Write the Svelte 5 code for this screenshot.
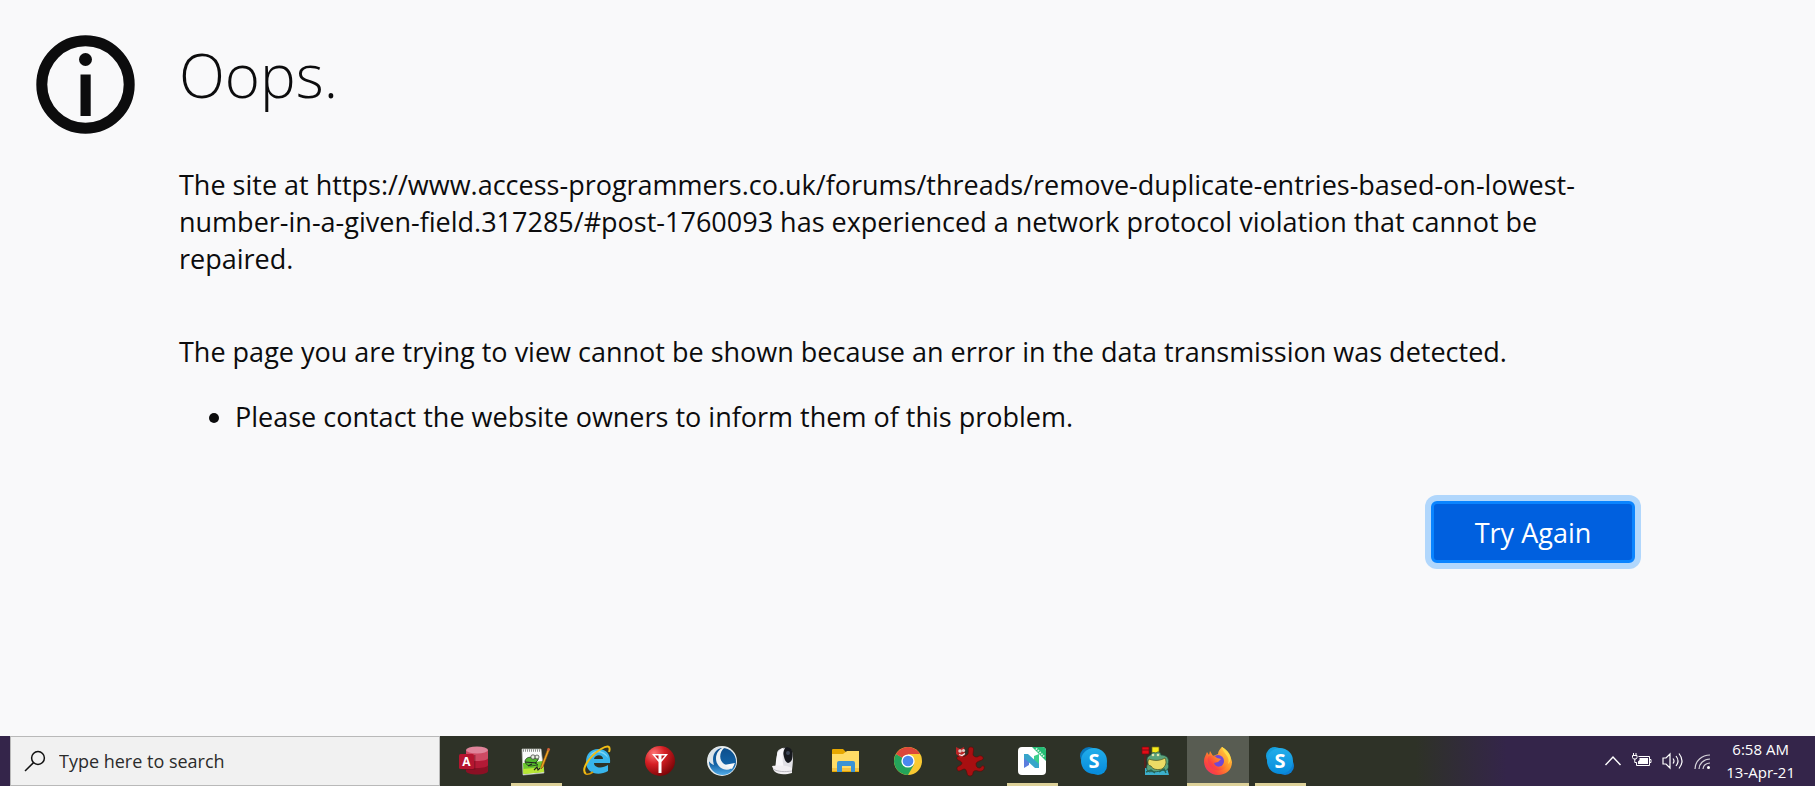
<script lang="ts">
	interface App {
		id: string;
		name: string;
		open?: boolean;
		active?: boolean;
	}

	const apps: App[] = [
		{ id: 'access', name: 'Access' },
		{ id: 'notepad', name: 'Notepad++', open: true },
		{ id: 'ie', name: 'Internet Explorer' },
		{ id: 'antenna', name: 'Antenna' },
		{ id: 'glary', name: 'Utilities' },
		{ id: 'camera', name: 'Camera' },
		{ id: 'explorer', name: 'File Explorer' },
		{ id: 'chrome', name: 'Chrome' },
		{ id: 'splat', name: 'IrfanView' },
		{ id: 'neat', name: 'Notes', open: true },
		{ id: 'skype', name: 'Skype' },
		{ id: 'frog', name: 'Frog' },
		{ id: 'firefox', name: 'Firefox', active: true },
		{ id: 'skype2', name: 'Skype', open: true }
	];

	let query = $state('');

	function retry() {
		location.reload();
	}
</script>

<div class="screen">
	<main class="error-page">
		<svg class="info-icon" viewBox="0 0 99 99" aria-hidden="true">
			<circle cx="49.5" cy="49.5" r="43.7" fill="none" stroke="#0c0c0d" stroke-width="11" />
			<circle cx="49.5" cy="24.5" r="6.5" fill="#0c0c0d" />
			<path d="M44.5 39.5h10.2v41.5H44.5z" fill="#0c0c0d" />
		</svg>

		<div class="content">
			<h1>Oops.</h1>
			<p class="short-desc">
				The site at https://www.access-programmers.co.uk/forums/threads/remove-duplicate-entries-based-on-lowest-number-in-a-given-field.317285/#post-1760093
				has experienced a network protocol violation that cannot be repaired.
			</p>
			<p>The page you are trying to view cannot be shown because an error in the data transmission was detected.</p>
			<ul>
				<li>Please contact the website owners to inform them of this problem.</li>
			</ul>
			<div class="actions">
				<button class="try-again" onclick={retry}>Try Again</button>
			</div>
		</div>
	</main>

	<footer class="taskbar">
		<label class="search">
			<svg width="22" height="22" viewBox="0 0 22 22" fill="none" stroke="#111" stroke-width="1.5">
				<circle cx="14" cy="8" r="6.4" />
				<path d="M9.5 12.6 1 21" />
			</svg>
			<input type="text" placeholder="Type here to search" aria-label="Search" bind:value={query} />
		</label>

		<nav class="apps">
			{#each apps as app}
				<button class="app" class:open={app.open} class:active={app.active} aria-label={app.name}>
					<svg width="32" height="32" viewBox="0 0 32 32">
						{#if app.id === 'access'}
							<path d="M8 5v21c0 2 5 3.500 11 3.500s11-1.500 11-3.500V5z" fill="#8b1024" />
							<path d="M8 5v15c0 2 5 3 11 3s11-1 11-3V5z" fill="#b31a36" />
							<path d="M8 5v8c0 2 5 3 11 3s11-1 11-3V5z" fill="#cf4a63" />
							<ellipse cx="19" cy="5" rx="11" ry="3.500" fill="#e0849a" />
							<path d="M16 10h1.500v15H4v-1h12z" fill="#6f0c1c" opacity=".5" />
							<rect x="1" y="9" width="15" height="15" rx="1.500" fill="#b5152f" />
							<text x="8.500" y="21" class="glyph" font-size="12">A</text>
						{:else if app.id === 'notepad'}
							<path d="M2 4h19l3 24-21 2z" fill="#fafafa" stroke="#b9bdb4" stroke-width=".7" />
							<path d="M3 18l20-2 1 11-20.500 2z" fill="#6cc62f" />
							<path d="M3 24l20.500-2 .5 5-20.500 2z" fill="#b8e534" />
							<path d="M3 5.500h17" stroke="#8d918c" stroke-width="2.500" stroke-dasharray="1 1" />
							<path d="M5 16c1-4 6-5 9-2 2-3 5-1 4 1l-3 3 3 2-7 1c-3 0-6-2-6-5z" fill="#51b52d" stroke="#203d19" stroke-width=".8" />
							<circle cx="13" cy="12" r="2.200" fill="#e7eee0" stroke="#333" stroke-width=".7" />
							<circle cx="17" cy="12" r="2" fill="#e7eee0" stroke="#333" stroke-width=".7" />
							<path d="M5 17l12 1M8 21l4-2M14 25l3-3 1 3 2-2" stroke="#222" stroke-width="1.100" fill="none" />
							<path d="M28 3l2 1-7 18-2 2v-3z" fill="#eda321" stroke="#78440e" stroke-width=".6" />
							<path d="M28 3l2 1-1 2-2-1z" fill="#d15b44" />
						{:else if app.id === 'ie'}
							<path d="M4 17C4 9 9 4 16 4c8 0 13 5 12 14H12c0 5 8 6 14 2v6c-10 6-22 2-22-9zm8-3h9c0-5-8-5-9 0z" fill="#38b5ec" />
							<path d="M6 14C8 8 13 5 18 6c4 1 7 3 8 7-4-5-10-7-15-4-3 1-4 3-5 5z" fill="#8ddcf8" opacity=".8" />
							<path d="M4 29C-2 24 9 10 19 4c7-4 10-3 8 3" fill="none" stroke="#f2bd14" stroke-width="2" />
							<path d="M4 29c2 1 4 0 7-2" fill="none" stroke="#d69a0b" stroke-width="1.600" />
						{:else if app.id === 'antenna'}
							<circle cx="16" cy="16" r="15" fill="url(#red-ball)" />
							<path d="M8 9h16l-6.500 8v11h-3V17z" fill="#fff" />
							<path d="M11 10.500h3.500v4zM21 10.500h-3.500v4z" fill="#c01a1f" />
						{:else if app.id === 'glary'}
							<circle cx="16" cy="16" r="15" fill="#e8edef" />
							<circle cx="16.500" cy="16.500" r="13.500" fill="url(#blue-ball)" />
							<path d="M19 2C9 4 6 19 17 24c5 2 9 0 11-4-2 1-5 1-8 0-7-3-8-12-1-18z" fill="#edf1f3" />
							<path d="M2 14C3 5 10 1 19 2 9 3 5 11 8 20c-3-1-5-3-6-6z" fill="#dce4e9" />
							<path d="M18 20l11-2-3 6z" fill="#f8fafb" />
						{:else if app.id === 'camera'}
							<path d="M9 8c1-5 10-7 14-3 3 3 2 13 1 20H7c1-4 2-11 2-17z" fill="#e1e0e5" />
							<path d="M15 3c5-2 9 0 9.500 5s-.5 9-4.500 10c-4-1-5-10-5-15z" fill="#17191e" />
							<path d="M17 3c-3 5-3 13-1 20H7C9 14 7 4 17 3z" fill="#f8f7fa" />
							<circle cx="20" cy="8" r="2" fill="#3d4657" />
							<path d="M4 21c5-1 16-1 20 2v5c-7 2-14 2-18-2z" fill="#f1eff2" />
							<path d="M5 24c5 3 12 3 19 2" fill="none" stroke="#bbb9c0" stroke-width="1" />
						{:else if app.id === 'explorer'}
							<path d="M2 5q0-1 1-1h10l3 3h13v20H2z" fill="#e6a700" />
							<path d="M2 9h11l4-3h12v20H2z" fill="#ffdc66" />
							<path d="M2 23h27v3H2z" fill="#f5c342" />
							<path d="M7 27v-9q0-2 2-2h14q2 0 2 2v9h-4v-6h-9v6z" fill="#3b93d4" />
						{:else if app.id === 'chrome'}
							<circle cx="16" cy="16" r="14" fill="#f9c932" />
							<path d="M16 16 3.900 9A14 14 0 0 0 16 30l6-10.500z" fill="#24a35a" />
							<path d="M16 16 3.900 9a14 14 0 0 1 24.200 0H16z" fill="#dc473b" />
							<circle cx="16" cy="16" r="6.600" fill="#fff" />
							<circle cx="16" cy="16" r="5.300" fill="#4b88ed" />
						{:else if app.id === 'splat'}
							<path d="M14 9c1-3-1-7 3-7s2 4 2 8c2 3 5 2 6 1 3-1 6 2 3 4-3 1-6 2-6 4s1 4 3 4c2 1 2-3 5-2 1 4-2 6-6 5-3-1-5 0-5 2 0 4-6 4-6 0-1-3-1-4-3-4-3 1-6 4-7 0-1-3 5-3 5-6-1-3-6-2-5-6 2-2 6 2 11-3z" fill="#a80f11" stroke="#560b09" stroke-width=".6" />
							<path d="M2 2l4 2 4-2 1 8-4 3-5-4z" fill="#b92425" />
							<circle cx="6" cy="6" r="1.800" fill="#dfc8c4" />
							<circle cx="9.500" cy="5.500" r="1.600" fill="#dfc8c4" />
							<path d="M5 9.500l3 1 3-2" stroke="#eee" stroke-width="1.200" fill="none" />
						{:else if app.id === 'neat'}
							<rect x="2" y="2" width="28" height="28" rx="4" fill="#fff" />
							<path d="M16 2h10q4 0 4 4v10z" fill="#25bd75" />
							<path d="M20 3.500l8.500 8.500" stroke="#d2f3e1" stroke-width="2" stroke-dasharray="1.500 1" />
							<path d="M8 9v14l5-3v-6z" fill="#5b7ddd" />
							<path d="M18 11l5-2v14l-5-3z" fill="#3bd08c" />
							<path d="M8 9h4l11 10v4h-4L8 13z" fill="#38a5ca" />
						{:else if app.id === 'skype' || app.id === 'skype2'}
							{#if app.id === 'skype'}
								<circle cx="11" cy="11" r="9" fill="#0877bd" />
								<circle cx="20" cy="21" r="9" fill="#0a91dc" />
							{:else}
								<circle cx="11" cy="11" r="9" fill="#159fdd" />
								<circle cx="21" cy="21" r="9" fill="#0c7fd4" />
							{/if}
							<circle cx="16" cy="16" r="13" fill="url(#skype-blue)" />
							<text x="16" y="23" class="glyph" font-size="20">S</text>
						{:else if app.id === 'frog'}
							<path d="M5 23h22l2 7H5z" fill="#3cafcd" />
							<path d="M2 2h7v7H2z" fill="#e30c16" stroke="#770a10" stroke-width=".7" />
							<path d="M2 5h7M5 9v14" stroke="#751316" />
							<path d="M12 2h7v7h-7z" fill="#f7ec1b" stroke="#777016" stroke-width=".7" />
							<path d="M7 14c1-4 4-3 5-6 2-1 3 0 4 0 2-2 5-1 5 2 6 0 9 4 7 9 2 4-1 8-6 6-5 3-10 1-13 2-4-3-2-7-1-9-1-1-1-3-1-4z" fill="#5ca37b" stroke="#204a42" stroke-width=".8" />
							<path d="M9 14c5 2 11 2 16-1 2 4 1 8-3 11-4 1-9 1-11-3-3 0-4-4-2-7z" fill="#eddb65" stroke="#555b24" stroke-width=".8" />
							<circle cx="13" cy="10" r="1.300" fill="#e3e7b0" />
							<circle cx="18" cy="10" r="1.300" fill="#e3e7b0" />
							<path d="M6 27l5-2 4 3M19 27l5-3 2 4" stroke="#256555" fill="none" stroke-width="1.400" />
						{:else if app.id === 'firefox'}
							<path d="M20 2c6 4 9 9 10 15 0 8-6 13-14 13S2 24 2 16c0-4 2-6 3-9l2 3 1-4 3 5 5-2c0-3 2-5 4-7z" fill="url(#fox)" />
							<circle cx="16" cy="16" r="6" fill="#7047d6" />
							<path d="M7 11c4-1 6 0 8 2l4 1-3 3-4 1c1 4 6 5 9 2 5-5 1-10-2-13-1-1 0-3 1-5 7 6 8 12 6 17-3 8-15 9-19 1-2-4-2-7 0-9z" fill="url(#fox)" />
							<path d="M20 2c1 7 9 9 6 17 5-4 3-12-6-17z" fill="#ffdc45" />
						{/if}
					</svg>
				</button>
			{/each}
		</nav>

		<div class="tray">
			<button class="tray-item" aria-label="Show hidden icons">
				<svg width="18" height="18" viewBox="0 0 18 18" fill="none" stroke="#fff" stroke-width="1.400">
					<path d="M1.500 13 9 5l7.500 8" />
				</svg>
			</button>
			<button class="tray-item" aria-label="Battery">
				<svg width="20" height="18" viewBox="0 0 20 18" fill="none" stroke="#fff">
					<path d="M6.500 4.500h11v9h-13v-3M17.500 7.500h1.500v3h-1.500" />
					<path d="M7.500 6H16v6H6V9.500l1.500-1.500z" fill="#fff" stroke="none" />
					<path d="M1.500 1v2M4 1v2M.5 3.500h4.500v2L4 7H1.500l-1-1.500zM2.750 7v3.500h2" />
				</svg>
			</button>
			<button class="tray-item" aria-label="Volume">
				<svg width="22" height="20" viewBox="0 0 22 20" fill="none" stroke="#fff" stroke-width="1.200">
					<path d="M1 7h3l4-4v14l-4-4H1z" />
					<path d="M11 7.500q2 2.500 0 5M14 5q4 5 0 10M17 2.500q6 7.500 0 15" />
				</svg>
			</button>
			<button class="tray-item" aria-label="Network">
				<svg width="17" height="18" viewBox="0 0 17 18" fill="none" stroke="#fff" stroke-width="1.200">
					<path d="M1 17C1 9 8 3 16 3M5 17C5 11.500 10 7 16 7M9 17c0-3.500 3-6 7-6" opacity=".8" />
					<circle cx="14.500" cy="15.500" r="1.500" fill="#fff" stroke="none" />
				</svg>
			</button>
			<button class="clock">
				<span>6:58 AM</span>
				<span>13-Apr-21</span>
			</button>
		</div>
	</footer>

	<!-- Shared gradients for the taskbar icons -->
	<svg class="defs" width="0" height="0" aria-hidden="true">
		<defs>
			<radialGradient id="red-ball" cx=".3" cy=".25" r=".8">
				<stop offset="0" stop-color="#f77" />
				<stop offset=".45" stop-color="#d61f24" />
				<stop offset="1" stop-color="#7b0508" />
			</radialGradient>
			<linearGradient id="blue-ball" x2="0" y2="1">
				<stop offset="0" stop-color="#0d4e8c" />
				<stop offset=".6" stop-color="#1262a5" />
				<stop offset="1" stop-color="#52ace8" />
			</linearGradient>
			<linearGradient id="skype-blue" x2="0" y2="1">
				<stop offset="0" stop-color="#22aeea" />
				<stop offset="1" stop-color="#078bdc" />
			</linearGradient>
			<linearGradient id="fox" x1="1" y1="0" x2="0" y2="1">
				<stop offset="0" stop-color="#ffe14b" />
				<stop offset=".45" stop-color="#ff9029" />
				<stop offset=".75" stop-color="#fb453e" />
				<stop offset="1" stop-color="#e52986" />
			</linearGradient>
		</defs>
	</svg>
</div>

<style>
	:global(body) {
		margin: 0;
		background: #f9f9fa;
	}

	.screen {
		min-height: 100vh;
		display: flex;
		flex-direction: column;
		font-family: 'Open Sans', 'Noto Sans', sans-serif;
		color: #0c0c0d;
	}

	/* Error page */
	.error-page {
		flex: 1;
		display: grid;
		grid-template-columns: 99px minmax(0, 1456px);
		column-gap: 44px;
		align-items: start;
		padding: 35px 36px 40px;
	}

	.info-icon {
		width: 99px;
		height: 99px;
	}

	h1 {
		margin: 0 0 51px;
		font-size: 60px;
		font-weight: 300;
		line-height: 80px;
	}

	p,
	li {
		font-size: 27px;
		line-height: 37px;
	}

	p {
		margin: 0;
	}

	.short-desc {
		margin-bottom: 56px;
	}

	ul {
		margin: 28px 0 0;
		padding-left: 56px;
	}

	.actions {
		display: flex;
		justify-content: flex-end;
		margin-top: 66px;
	}

	.try-again {
		min-width: 204px;
		height: 62px;
		border: 3px solid #0a84ff;
		border-radius: 6px;
		box-shadow: 0 0 0 6px #b1d7fc;
		background: #0060df;
		color: #fff;
		font-family: inherit;
		font-size: 27px;
		line-height: 37px;
		cursor: pointer;
	}

	/* Taskbar */
	.taskbar {
		display: flex;
		height: 50px;
		padding-left: 10px;
		background: linear-gradient(to right, #34254a 20%, #2e3227 20%, #2e3227 78%, #34254a 83%);
	}

	.search {
		box-sizing: border-box;
		width: 430px;
		flex-shrink: 1;
		display: flex;
		align-items: center;
		gap: 13px;
		padding: 0 13px;
		border: 1px solid #b9b9b9;
		background: #f1f1f1;
	}

	.search input {
		flex: 1;
		min-width: 0;
		padding: 0;
		border: 0;
		outline: 0;
		background: none;
		font-family: inherit;
		font-size: 18px;
	}

	.search input::placeholder {
		color: #2b2b2b;
		opacity: 1;
	}

	.apps {
		display: flex;
		margin-left: 3px;
	}

	.app {
		width: 62px;
		padding: 0;
		border: 0;
		display: flex;
		flex-direction: column;
		align-items: center;
		background: none;
		font-family: inherit;
	}

	.app svg {
		margin-top: 9px;
	}

	.app.open::after,
	.app.active::after {
		content: '';
		width: 51px;
		height: 3px;
		margin-top: auto;
		background: #ddd199;
	}

	.app.active {
		background: #585c52;
	}

	.app.active::after {
		width: 100%;
	}

	.glyph {
		fill: #fff;
		font-weight: 700;
		text-anchor: middle;
	}

	/* Tray */
	.tray {
		display: flex;
		align-items: center;
		gap: 10px;
		margin-left: auto;
		padding-right: 20px;
	}

	.tray-item,
	.clock {
		padding: 0;
		border: 0;
		background: none;
		color: #fff;
		font-family: inherit;
	}

	.tray-item {
		display: flex;
	}

	.clock {
		display: flex;
		flex-direction: column;
		align-items: center;
		margin-left: 5px;
		font-size: 15px;
		line-height: 23px;
	}

	.defs {
		position: absolute;
	}
</style>
